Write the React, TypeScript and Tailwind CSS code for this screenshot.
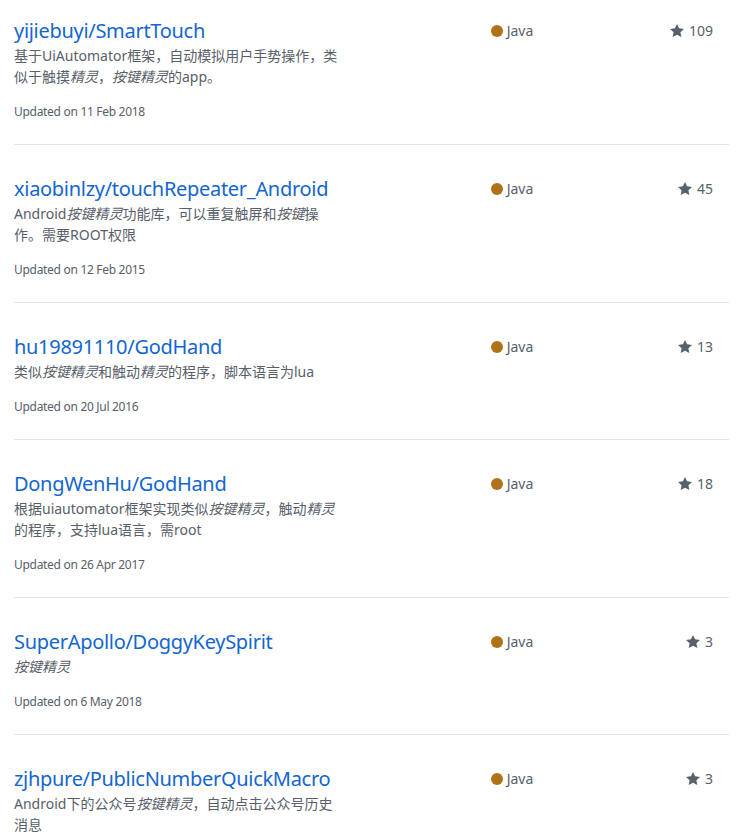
import React from "react";

type Repo = {
  name: string;
  desc: React.ReactNode;
  updated: string;
  stars: number;
};

const Em = ({ children }: { children: React.ReactNode }) => <em className="italic">{children}</em>;

const repos: Repo[] = [
  {
    name: "yijiebuyi/SmartTouch",
    desc: (
      <>
        基于UiAutomator框架，自动模拟用户手势操作，类似于触摸<Em>精灵</Em>，<Em>按键精灵</Em>的app。
      </>
    ),
    updated: "11 Feb 2018",
    stars: 109,
  },
  {
    name: "xiaobinlzy/touchRepeater_Android",
    desc: (
      <>
        Android<Em>按键精灵</Em>功能库，可以重复触屏和<Em>按键</Em>操作。需要ROOT权限
      </>
    ),
    updated: "12 Feb 2015",
    stars: 45,
  },
  {
    name: "hu19891110/GodHand",
    desc: (
      <>
        类似<Em>按键精灵</Em>和触动<Em>精灵</Em>的程序，脚本语言为lua
      </>
    ),
    updated: "20 Jul 2016",
    stars: 13,
  },
  {
    name: "DongWenHu/GodHand",
    desc: (
      <>
        根据uiautomator框架实现类似<Em>按键精灵</Em>，触动<Em>精灵</Em>的程序，支持lua语言，需root
      </>
    ),
    updated: "26 Apr 2017",
    stars: 18,
  },
  {
    name: "SuperApollo/DoggyKeySpirit",
    desc: <Em>按键精灵</Em>,
    updated: "6 May 2018",
    stars: 3,
  },
  {
    name: "zjhpure/PublicNumberQuickMacro",
    desc: (
      <>
        Android下的公众号<Em>按键精灵</Em>，自动点击公众号历史消息
      </>
    ),
    updated: "6 May 2018",
    stars: 3,
  },
];

function Star() {
  return (
    <svg width="14" height="16" viewBox="0 0 14 16" className="fill-[#586069] inline-block mr-[5px]">
      <path d="M14 6l-4.9-.64L7 1 4.9 5.36 0 6l3.6 3.26L2.67 14 7 11.67 11.33 14l-.93-4.74L14 6z" />
    </svg>
  );
}

export default function App() {
  return (
    <div className="bg-white min-h-screen pl-[14px] pr-[8px] font-['Segoe_UI','Noto_Sans','Noto_Sans_CJK_SC',sans-serif]">
      {repos.map((r, i) => (
        <div
          key={r.name}
          className={`flex border-b border-[#e1e4e8] pb-[23px] ${i === 0 ? "pt-[19px]" : "pt-8"}`}
        >
          <div className="w-2/3 pr-4">
            <a className="block text-[20px] leading-6 tracking-[-0.3px] text-[#1366d0]">{r.name}</a>
            <p className="max-w-[325px] mt-[2px] text-[14px] leading-[21px] text-[#586069]">{r.desc}</p>
            <div className="mt-4 text-[12px] leading-[18px] tracking-[-0.3px] text-[#586069]">Updated on {r.updated}</div>
          </div>
          <div className="w-1/6 flex items-start">
            <div className="flex items-center text-[14px] leading-6 text-[#586069]">
              <span className="w-3 h-3 rounded-full bg-[#b07219] mr-[4px]" />
              Java
            </div>
          </div>
          <div className="w-1/6 pr-4 text-right">
            <span className="inline-flex items-center text-[14px] leading-6 text-[#586069]">
              <Star />
              {r.stars}
            </span>
          </div>
        </div>
      ))}
    </div>
  );
}
